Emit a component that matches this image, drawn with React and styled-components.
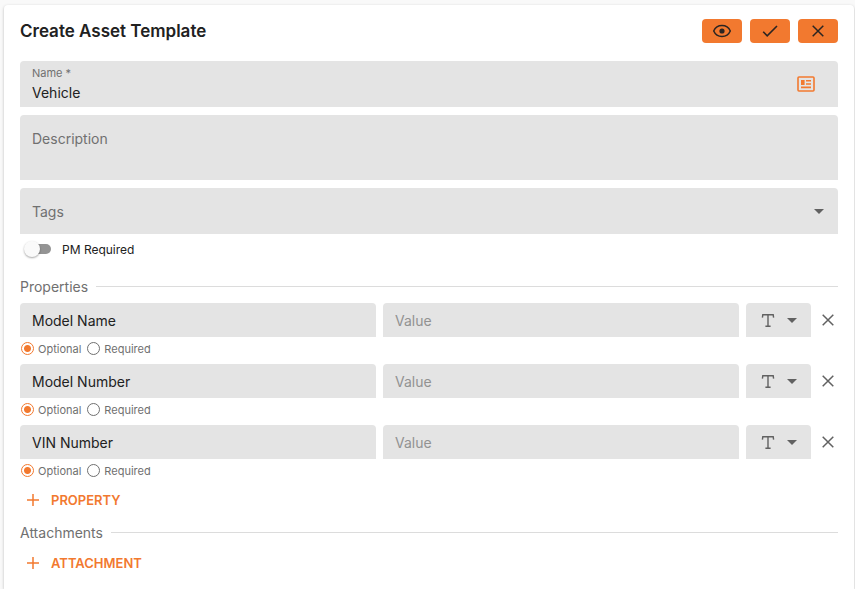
import React, { useState } from "react";
import styled, { createGlobalStyle } from "styled-components";

const properties = [
  { id: 1, name: "Model Name" },
  { id: 2, name: "Model Number" },
  { id: 3, name: "VIN Number" },
];

const EyeIcon = () => (
  <svg width="20" height="20" viewBox="0 0 20 20" fill="none" aria-hidden="true">
    <path
      d="M1.7 10C3.2 6.6 6.4 4.6 10 4.6s6.8 2 8.3 5.4c-1.5 3.4-4.7 5.4-8.3 5.4S3.2 13.4 1.7 10z"
      stroke="currentColor"
      strokeWidth="1.5"
      strokeLinejoin="round"
    />
    <circle cx="10" cy="10" r="2.6" fill="currentColor" />
  </svg>
);

const CheckIcon = () => (
  <svg width="20" height="20" viewBox="0 0 20 20" fill="none" aria-hidden="true">
    <path d="M3.2 10.8l4 4L17 5" stroke="currentColor" strokeWidth="1.6" />
  </svg>
);

const CloseIcon = () => (
  <svg width="20" height="20" viewBox="0 0 20 20" fill="none" aria-hidden="true">
    <path
      d="M4.7 4.7l10.6 10.6M15.3 4.7L4.7 15.3"
      stroke="currentColor"
      strokeWidth="1.5"
    />
  </svg>
);

const PlusIcon = () => (
  <svg width="12" height="12" viewBox="0 0 12 12" fill="none" aria-hidden="true">
    <path d="M6 0v12M0 6h12" stroke="currentColor" strokeWidth="1.5" />
  </svg>
);

const CardIcon = () => (
  <svg width="18" height="16" viewBox="0 0 18 16" fill="none" aria-hidden="true">
    <rect x="1" y="1" width="16" height="14" rx="1" stroke="currentColor" strokeWidth="1.6" />
    <path
      d="M4 4h3.6v5H4zM9 4h5v1.6H9zM9 7.2h5v1.6H9zM4 10.6h10v1.6H4z"
      fill="currentColor"
    />
  </svg>
);

const TypeIcon = () => (
  <svg width="14" height="14" viewBox="0 0 14 14" fill="none" aria-hidden="true">
    <path
      d="M1.4 4.6L1.8 1.8h10.4l.4 2.8M7 1.8v11.4M4.4 13.2h5.2"
      stroke="currentColor"
      strokeWidth="1.4"
    />
  </svg>
);

const ArrowIcon = () => (
  <svg width="10" height="5" viewBox="0 0 10 5" aria-hidden="true">
    <path d="M0 0h10L5 5z" fill="currentColor" />
  </svg>
);

function PropertyItem({ property }) {
  const [name, setName] = useState(property.name);
  const [required, setRequired] = useState(false);
  const group = `property-${property.id}`;

  return (
    <li>
      <PropertyRow>
        <PropertyInput
          aria-label="Property name"
          value={name}
          onChange={(e) => setName(e.target.value)}
        />
        <PropertyInput aria-label="Property value" placeholder="Value" />
        <TypeField>
          <Select aria-label="Property type" defaultValue="text">
            <option value="text" aria-label="Text" />
          </Select>
          <TypeMarks>
            <TypeIcon />
            <ArrowIcon />
          </TypeMarks>
        </TypeField>
        <RemoveButton type="button" aria-label="Remove property">
          <CloseIcon />
        </RemoveButton>
      </PropertyRow>
      <RadioRow>
        <RadioLabel>
          <Radio
            type="radio"
            name={group}
            checked={!required}
            onChange={() => setRequired(false)}
          />
          Optional
        </RadioLabel>
        <RadioLabel>
          <Radio
            type="radio"
            name={group}
            checked={required}
            onChange={() => setRequired(true)}
          />
          Required
        </RadioLabel>
      </RadioRow>
    </li>
  );
}

export default function App() {
  const [name, setName] = useState("Vehicle");

  return (
    <>
      <GlobalStyle />
      <Card>
        <Header>
          <Title>Create Asset Template</Title>
          <Actions>
            <ActionButton type="button" aria-label="Preview">
              <EyeIcon />
            </ActionButton>
            <ActionButton type="button" aria-label="Save">
              <CheckIcon />
            </ActionButton>
            <ActionButton type="button" aria-label="Close">
              <CloseIcon />
            </ActionButton>
          </Actions>
        </Header>

        <Fields>
          <NameField>
            <NameText>
              <label htmlFor="name">Name *</label>
              <input
                id="name"
                value={name}
                onChange={(e) => setName(e.target.value)}
              />
            </NameText>
            <IconButton type="button" aria-label="Name format">
              <CardIcon />
            </IconButton>
          </NameField>
          <Description aria-label="Description" placeholder="Description" />
          <TagsField>
            <Select aria-label="Tags" defaultValue="">
              <option value="">Tags</option>
            </Select>
            <TagsArrow>
              <ArrowIcon />
            </TagsArrow>
          </TagsField>
        </Fields>

        <SwitchLabel>
          <Switch type="checkbox" role="switch" />
          PM Required
        </SwitchLabel>

        <SectionTitle>Properties</SectionTitle>
        <PropertyList>
          {properties.map((property) => (
            <PropertyItem key={property.id} property={property} />
          ))}
        </PropertyList>
        <AddButton type="button">
          <PlusIcon />
          PROPERTY
        </AddButton>

        <SectionTitle>Attachments</SectionTitle>
        <AddButton type="button">
          <PlusIcon />
          ATTACHMENT
        </AddButton>
      </Card>
    </>
  );
}

const GlobalStyle = createGlobalStyle`
  * {
    box-sizing: border-box;
  }
  body {
    margin: 0;
    background: #f9f9f9;
    color: #212121;
    font-family: Inter, "Liberation Sans", sans-serif;
    font-size: 14px;
  }
  button, input, select, textarea {
    margin: 0;
    padding: 0;
    border: 0;
    background: none;
    color: inherit;
    font: inherit;
  }
  button {
    cursor: pointer;
  }
  svg {
    display: block;
  }
`;

const Card = styled.main`
  min-height: calc(100vh - 5px);
  margin: 5px 1px 0 4px;
  padding: 14px 16px 0;
  background: white;
  border-radius: 4px 4px 0 0;
  box-shadow: 0 1px 3px rgba(0, 0, 0, 0.25);
`;

const Header = styled.header`
  display: flex;
  align-items: center;
  justify-content: space-between;
  height: 24px;
  margin-bottom: 18px;
`;

const Title = styled.h1`
  margin: 0;
  font-size: 17px;
  font-weight: 600;
`;

const Actions = styled.div`
  display: flex;
  gap: 8px;
`;

const ActionButton = styled.button`
  display: flex;
  align-items: center;
  justify-content: center;
  width: 40px;
  height: 24px;
  border-radius: 4px;
  background: #f2792f;
  color: #2b2522;
`;

const Fields = styled.div`
  display: flex;
  flex-direction: column;
  gap: 8px;
`;

const Field = styled.div`
  background: #e4e4e4;
  border-radius: 4px 4px 0 0;
`;

const NameField = styled(Field)`
  display: flex;
  align-items: center;
  justify-content: space-between;
  height: 46px;
  padding: 0 23px 0 12px;
`;

const NameText = styled.div`
  display: flex;
  flex: 1;
  flex-direction: column;
  label {
    color: #707070;
    font-size: 11px;
    line-height: 16px;
  }
  input {
    height: 22px;
  }
`;

const IconButton = styled.button`
  color: #f2792f;
`;

const Description = styled.textarea`
  display: block;
  height: 65px;
  padding: 14px 12px;
  background: #e4e4e4;
  border-radius: 4px 4px 0 0;
  line-height: 20px;
  resize: none;
  &::placeholder {
    color: #707070;
  }
`;

const Select = styled.select`
  width: 100%;
  height: 100%;
  padding: 0 12px;
  appearance: none;
`;

const TagsField = styled(Field)`
  position: relative;
  height: 46px;
  color: #707070;
`;

const TagsArrow = styled.span`
  position: absolute;
  inset: 0 14px 0 auto;
  display: flex;
  align-items: center;
  color: #616161;
  pointer-events: none;
`;

const SwitchLabel = styled.label`
  display: flex;
  align-items: center;
  gap: 11px;
  height: 30px;
  margin-bottom: 12px;
  padding-left: 4px;
  font-size: 12px;
`;

const Switch = styled.input`
  position: relative;
  width: 27px;
  height: 16px;
  appearance: none;
  &::before {
    content: "";
    position: absolute;
    inset: 3px 0 3px 3px;
    border-radius: 5px;
    background: #949494;
  }
  &::after {
    content: "";
    position: absolute;
    top: 0;
    left: 0;
    width: 16px;
    height: 16px;
    border-radius: 50%;
    background: #fafafa;
    box-shadow: 0 1px 2px rgba(0, 0, 0, 0.35);
  }
  &:checked::before {
    background: #f2792f;
  }
  &:checked::after {
    left: 11px;
  }
`;

const SectionTitle = styled.h2`
  display: flex;
  align-items: center;
  gap: 8px;
  height: 20px;
  margin: 8px 0 7px;
  color: #707070;
  font-size: 14px;
  font-weight: 400;
  &::after {
    content: "";
    flex: 1;
    height: 1px;
    background: #dcdcdc;
  }
`;

const PropertyList = styled.ul`
  margin: 0;
  padding: 0;
  list-style: none;
`;

const PropertyRow = styled.div`
  display: grid;
  grid-template-columns: 1fr 1fr 65px 20px;
  gap: 7px;
  height: 34px;
`;

const PropertyInput = styled.input`
  min-width: 0;
  padding: 0 12px;
  background: #e4e4e4;
  border-radius: 4px 4px 0 0;
  &::placeholder {
    color: #929292;
  }
`;

const TypeField = styled(Field)`
  position: relative;
`;

const TypeMarks = styled.span`
  position: absolute;
  inset: 0;
  display: flex;
  align-items: center;
  gap: 12px;
  padding-left: 15px;
  color: #616161;
  pointer-events: none;
`;

const RemoveButton = styled.button`
  display: flex;
  align-items: center;
  justify-content: center;
  color: #616161;
`;

const RadioRow = styled.div`
  display: flex;
  align-items: center;
  gap: 6px;
  height: 27px;
  padding: 0 0 4px 1px;
`;

const RadioLabel = styled.label`
  display: flex;
  align-items: center;
  gap: 4px;
  color: #707070;
  font-size: 11px;
  line-height: 12px;
`;

const Radio = styled.input`
  width: 13px;
  height: 13px;
  border: 1px solid #707070;
  border-radius: 50%;
  appearance: none;
  &:checked {
    border-color: #f2792f;
    background: radial-gradient(circle, #f2792f 3px, transparent 4px);
  }
`;

const AddButton = styled.button`
  display: flex;
  align-items: center;
  gap: 12px;
  height: 28px;
  padding: 0 7px;
  color: #f2792f;
  font-size: 13px;
  font-weight: 600;
`;
